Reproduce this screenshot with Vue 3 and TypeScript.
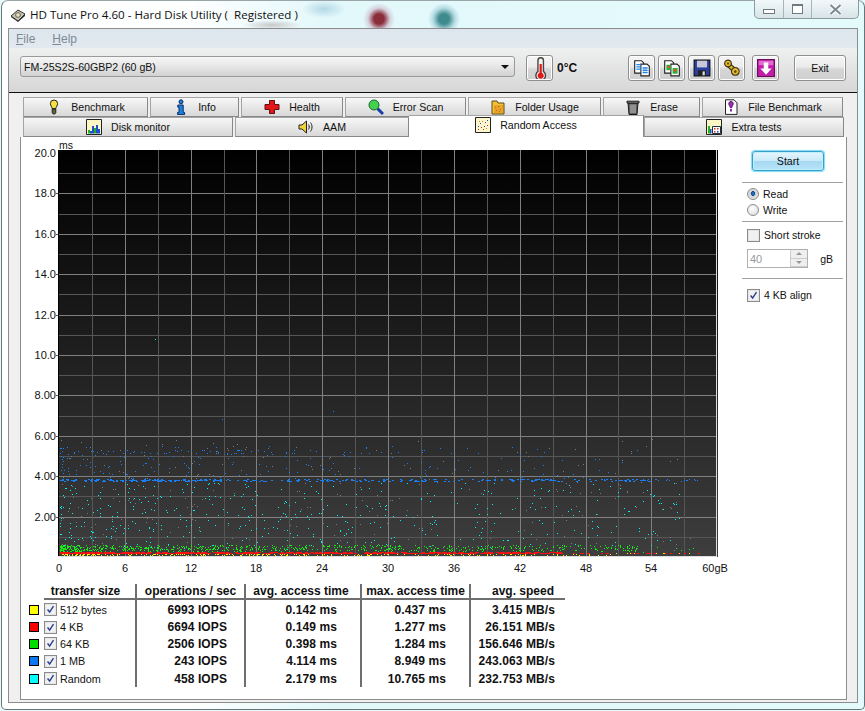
<template>
  <div class="window">
    <div class="titlebar">
      <svg class="ico" viewBox="0 0 16 16"><path d="M1 9l7-6 7 4-7 7z" fill="#c9c2ae" stroke="#333" /><path d="M1 9l7 5 7-7v2l-7 6-7-5z" fill="#333" /><circle cx="8" cy="8" r="2.4" fill="#e6dfc8" stroke="#665" /></svg>
      <span class="title">HD Tune Pro 4.60 - Hard Disk Utility (&nbsp; Registered )</span>
      <div class="caption">
        <div class="cap cap-min"><i></i></div>
        <div class="cap cap-max"><i></i></div>
        <div class="cap cap-close">
          <svg width="13" height="11" viewBox="0 0 13 11"><path d="M1.5 1l10 9M11.5 1l-10 9" stroke="#fff" stroke-width="4" /><path d="M1.5 1l10 9M11.5 1l-10 9" stroke="#7d8a90" stroke-width="2" /></svg>
        </div>
      </div>
    </div>

    <div class="client">
      <div class="menubar">
        <span><u>F</u>ile</span>
        <span><u>H</u>elp</span>
      </div>

      <div class="toolbar">
        <div class="combo">
          <span>FM-25S2S-60GBP2 (60 gB)</span>
          <i class="combo-arrow"></i>
        </div>
        <button class="tool-btn temp-btn" type="button"><AppIcon name="thermo" /></button>
        <span class="temp">0°C</span>
        <div class="tool-group">
          <button v-for="t in toolIcons" :key="t" class="tool-btn" :class="'tb-' + t" type="button"><AppIcon :name="t" /></button>
        </div>
        <button class="exit-btn" type="button">Exit</button>
      </div>

      <div class="tabs">
        <div class="tab-row">
          <div v-for="t in tabsTop" :key="t.label" class="tab" :style="{ width: t.w + 'px' }">
            <AppIcon :name="t.icon" />
            <span>{{ t.label }}</span>
          </div>
        </div>
        <div class="tab-row row2">
          <div v-for="t in tabsBottom" :key="t.label" class="tab" :class="{ active: t.active }" :style="{ width: t.w + 'px' }">
            <AppIcon :name="t.icon" />
            <span>{{ t.label }}</span>
          </div>
        </div>
      </div>

      <section class="panel">
        <div class="main">
          <svg class="chart" viewBox="21 138 719 442" width="719" height="442">
            <defs>
              <linearGradient id="plotBg" x1="0" y1="0" x2="0" y2="1">
                <stop offset="0" stop-color="#000" />
                <stop offset="1" stop-color="#3e3e3e" />
              </linearGradient>
            </defs>
            <rect x="58" y="151" width="660" height="407" fill="url(#plotBg)" />
            <g shape-rendering="crispEdges">
              <line v-for="g in hGrid" :key="'h' + g.y" x1="58" x2="717" :y1="g.y + 0.5" :y2="g.y + 0.5" :stroke="g.major ? '#808080' : '#565656'" />
              <line v-for="g in vGrid" :key="'v' + g.x" :x1="g.x + 0.5" :x2="g.x + 0.5" y1="151" y2="557" :stroke="g.major ? '#808080' : '#565656'" />
              <path v-for="s in scatter" :key="s.color" :d="s.d" :fill="s.color" />
              <line x1="58.5" x2="58.5" y1="151" y2="558" stroke="#000" />
              <line x1="716.5" x2="716.5" y1="151" y2="558" stroke="#ddd" />
              <line x1="58" x2="717" y1="557.5" y2="557.5" stroke="#ddd" />
              <line v-for="g in hGrid.filter(h => h.major)" :key="'t' + g.y" x1="56" x2="58" :y1="g.y + 0.5" :y2="g.y + 0.5" stroke="#555" />
            </g>
            <text x="59" y="150" class="axis unit">ms</text>
            <text v-for="l in yLabels" :key="l.t" x="56" :y="l.y + 4" text-anchor="end" class="axis">{{ l.t }}</text>
            <text v-for="l in xLabels" :key="l.t" :x="l.x" y="573" text-anchor="middle" class="axis">{{ l.t }}</text>
          </svg>

          <aside class="side">
            <button class="start-btn" type="button">Start</button>
            <hr />
            <label class="opt first"><i class="radio on"></i>Read</label>
            <label class="opt"><i class="radio"></i>Write</label>
            <hr class="tight" />
            <label class="opt stroke"><i class="check"></i>Short stroke</label>
            <div class="spin-row">
              <div class="spin">
                <span>40</span>
                <div class="spin-btns"><b class="up"></b><b class="down"></b></div>
              </div>
              <span>gB</span>
            </div>
            <hr class="last" />
            <label class="opt"><i class="check"><svg viewBox="0 0 13 13"><path d="M3 6.5l2.5 3L10 2.5" fill="none" stroke="#2c3f8f" stroke-width="1.7" /></svg></i>4 KB align</label>
          </aside>
        </div>

        <div class="results">
          <div></div>
          <div class="th first">transfer size</div>
          <div class="th bar">operations / sec</div>
          <div class="th bar avgh">avg. access time</div>
          <div class="th bar">max. access time</div>
          <div class="th bar speed">avg. speed</div>
          <template v-for="r in rows" :key="r.name">
            <div class="sw-cell"><i class="swatch" :style="{ background: r.color }"></i></div>
            <div class="name-cell">
              <i class="check small"><svg viewBox="0 0 13 13"><path d="M3 6.5l2.5 3L10 2.5" fill="none" stroke="#2c3f8f" stroke-width="1.7" /></svg></i>
              {{ r.name }}
            </div>
            <div class="val bar c2">{{ r.ops }} IOPS</div>
            <div class="val bar c3">{{ r.avg }} ms</div>
            <div class="val bar c3">{{ r.max }} ms</div>
            <div class="val bar c5">{{ r.speed }} MB/s</div>
          </template>
        </div>
      </section>
    </div>
  </div>
</template>

<script setup lang="ts">
import { computed, defineComponent, h } from 'vue'

type Shape = { d: string; fill?: string; stroke?: string; w?: number }

const icons: Record<string, Shape[]> = {
  bulb: [
    { d: 'M8 1a3.6 3.6 0 0 0-3.6 3.6c0 2 1.5 3 1.8 5h3.6c.3-2 1.8-3 1.8-5A3.6 3.6 0 0 0 8 1z', fill: '#f6e23c', stroke: '#222' },
    { d: 'M6.2 10h3.6v3.6l-1 1.4H7.2l-1-1.4z', fill: '#6b6134', stroke: '#222' },
  ],
  info: [
    { d: 'M8 .8a2 2 0 1 1 0 4 2 2 0 0 1 0-4z', fill: '#1b7fe0', stroke: '#0d2c66' },
    { d: 'M4.8 6h5.4v7.4h1.4v2.2H4.6v-2.2H6V8.2H4.8z', fill: '#1b7fe0', stroke: '#0d2c66' },
  ],
  health: [{ d: 'M5.5 1.500h5v4H15v5h-4.500v4h-5v-4H1v-5h4.500z', fill: '#e2161b', stroke: '#5c1010' }],
  search: [
    { d: 'M9.600 9.600L15 15', stroke: '#1a3ea8', w: 3 },
    { d: 'M6 1a5 5 0 1 1 0 10A5 5 0 0 1 6 1z', fill: '#45d24a', stroke: '#14663a' },
  ],
  folder: [
    { d: 'M2 2h5l1 2h6v11H2z', fill: '#f3c230', stroke: '#5a4a1c' },
    { d: 'M4 6h9v8H4z', fill: '#e9a227' },
    { d: 'M5 8h1v1H5zM8 7h1v1H8zM10 10h1v1h-1zM6 11h1v1H6zM9 12h1v1H9z', fill: '#b66a18' },
  ],
  trash: [
    { d: 'M3 4h10l-1 11.500H4z', fill: '#5d5d5d', stroke: '#1c1c1c' },
    { d: 'M2 2.200h12V4H2z', fill: '#9b9b9b', stroke: '#1c1c1c' },
    { d: 'M6 5.500v8.500M8 5.500v8.500M10 5.500v8.500', stroke: '#c4c4c4' },
  ],
  filebench: [
    { d: 'M2.500 .8h8.500l3 3v11.600H2.500z', fill: '#fff', stroke: '#222' },
    { d: 'M8 2.500c1.600 0 2.200 1 2.200 2.200 0 1.600-1.200 2.400-1.500 4H7.300c-.3-1.600-1.500-2.400-1.500-4C5.800 3.500 6.400 2.500 8 2.500z', fill: '#9a2fb0', stroke: '#5a1a70' },
    { d: 'M7 10h2v2.500H7z', fill: '#8a2aa0' },
  ],
  monitor: [
    { d: 'M.5.5h15v15H.5z', fill: '#fbf6c4', stroke: '#222' },
    { d: 'M2 11h2v3.500H2zM8 9h2v5.500H8z', fill: '#22b322' },
    { d: 'M4 12h2v2.500H4zM6 7h2v7.500H6zM10 6h2v8.500h-2zM12 10h2v4.500h-2z', fill: '#1f4fd0' },
  ],
  speaker: [
    { d: 'M1 6h3l4.500-4v12L4 10H1z', fill: '#f2d43a', stroke: '#222' },
    { d: 'M10.500 5.500c1 1.500 1 3.500 0 5M12.500 3.500c2 2.500 2 6.500 0 9', fill: 'none', stroke: '#222' },
  ],
  random: [
    { d: 'M.5.5h15v15H.5z', fill: '#fdf7cf', stroke: '#222' },
    { d: 'M3 12h1v1H3zM6 10h1v1H6zM10 5h1v1h-1zM12 8h1v1h-1zM8 12h1v1H8z', fill: '#d02020' },
    { d: 'M5 6h1v1H5zM9 9h1v1H9zM12 3h1v1h-1zM3 9h1v1H3z', fill: '#2040c0' },
    { d: 'M7 4h1v1H7zM11 11h1v1h-1zM4 4h1v1H4z', fill: '#d09020' },
  ],
  extra: [
    { d: 'M.5.5h15v15H.5z', fill: '#fbf6c4', stroke: '#222' },
    { d: 'M2 7h2v7.500H2z', fill: '#22b322' },
    { d: 'M4 10h1.500v4.500H4z', fill: '#1f4fd0' },
    { d: 'M6.500 7.500h8v7h-8z', fill: '#fff', stroke: '#234' },
    { d: 'M8 9h1.500v1.500H8zM11 9h1.500v1.500H11zM8 12h1.500v1.500H8z', fill: '#d03030' },
    { d: 'M11 12h1.500v1.500H11z', fill: '#2040c0' },
  ],
  thermo: [
    { d: 'M6.500 2.500a2 2 0 0 1 4 0v8a3.500 3.500 0 1 1-4 0z', fill: '#f4f0ea', stroke: '#444' },
    { d: 'M7.700 5h1.600v6.500a2.200 2.200 0 1 1-1.600 0z', fill: '#e01a1a' },
  ],
  copydoc: [
    { d: 'M1.500 1.500h6l2 2v9h-8z', fill: '#fff', stroke: '#222' },
    { d: 'M7 4.500h5.500l2 2v8.500H7z', fill: '#fff', stroke: '#222' },
    { d: 'M3 5h4M3 7h4M3 9h4M8.500 8h4.500M8.500 10h4.500M8.500 12h4.500', stroke: '#1d86e8', w: 1.2 },
  ],
  copyimg: [
    { d: 'M1.500 1.500h6l2 2v9h-8z', fill: '#fff', stroke: '#222' },
    { d: 'M7 4.500h5.500l2 2v8.500H7z', fill: '#fff', stroke: '#222' },
    { d: 'M3 5h4v5H3zM8.500 8h4.500v5H8.500z', fill: '#28b040' },
    { d: 'M4 6h2v2H4zM9.500 9h2.500v2H9.500z', fill: '#e85020' },
  ],
  floppy: [
    { d: 'M1 1h14v14H1z', fill: '#2b3fa0', stroke: '#111' },
    { d: 'M3.500 1.500h9v6h-9z', fill: '#c8c8d8' },
    { d: 'M4.500 10h7v5h-7z', fill: '#222' },
    { d: 'M8.500 11h2v3.500h-2z', fill: '#ddd' },
  ],
  tools: [
    { d: 'M3 3.500l10 9', stroke: '#3a3010', w: 4.5 },
    { d: 'M3 3.500l10 9', stroke: '#e4b82c', w: 2.5 },
    { d: 'M4.500 1a3 3 0 1 1-.1 0zM11 7.500a3.500 3.500 0 1 1-.1 0z', fill: '#e4b82c', stroke: '#3a3010' },
    { d: 'M4.500 3a1 1 0 1 1-.1 0zM11 10a1.200 1.200 0 1 1-.1 0z', fill: '#5a4510' },
  ],
  save: [
    { d: 'M.5.5h15v15H.5z', fill: '#c01ea8', stroke: '#6a0f5c' },
    { d: 'M1.500 1.500h13v4h-13z', fill: '#e26cd0' },
    { d: 'M6 3h4v5.500h3L8 14 3 8.500h3z', fill: '#fff' },
  ],
}

const AppIcon = defineComponent({
  props: { name: { type: String, required: true } },
  setup(props) {
    return () =>
      h('svg', { class: 'ico', viewBox: '0 0 16 16', width: 16, height: 16, style: { flex: 'none' } },
        icons[props.name].map(s =>
          h('path', { d: s.d, fill: s.fill ?? 'none', stroke: s.stroke ?? 'none', 'stroke-width': s.w ?? 1 })
        )
      )
  },
})

const toolIcons = ['copydoc', 'copyimg', 'floppy', 'tools', 'save']

const tabsTop = [
  { label: 'Benchmark', icon: 'bulb', w: 125 },
  { label: 'Info', icon: 'info', w: 89 },
  { label: 'Health', icon: 'health', w: 102 },
  { label: 'Error Scan', icon: 'search', w: 121 },
  { label: 'Folder Usage', icon: 'folder', w: 133 },
  { label: 'Erase', icon: 'trash', w: 97 },
  { label: 'File Benchmark', icon: 'filebench', w: 141 },
]
const tabsBottom = [
  { label: 'Disk monitor', icon: 'monitor', w: 210, active: false },
  { label: 'AAM', icon: 'speaker', w: 174, active: false },
  { label: 'Random Access', icon: 'random', w: 235, active: true },
  { label: 'Extra tests', icon: 'extra', w: 200, active: false },
]

const rows = [
  { name: '512 bytes', color: '#ffff00', ops: 6993, avg: '0.142', max: '0.437', speed: '3.415' },
  { name: '4 KB', color: '#ff0000', ops: 6694, avg: '0.149', max: '1.277', speed: '26.151' },
  { name: '64 KB', color: '#00e000', ops: 2506, avg: '0.398', max: '1.284', speed: '156.646' },
  { name: '1 MB', color: '#0a78f0', ops: 243, avg: '4.114', max: '8.949', speed: '243.063' },
  { name: 'Random', color: '#00ffff', ops: 458, avg: '2.179', max: '10.765', speed: '232.753' },
]

const yOf = (ms: number) => Math.round(558 - ms * 20.2)
const xOf = (gb: number) => Math.round(59 + gb * 10.97)

const hGrid = Array.from({ length: 19 }, (_, i) => ({ y: yOf(i + 1), major: (i + 1) % 2 === 0 }))
const vGrid = Array.from({ length: 19 }, (_, i) => ({ x: xOf((i + 1) * 3), major: (i + 1) % 2 === 0 }))
const yLabels = ['2.00', '4.00', '6.00', '8.00', '10.0', '12.0', '14.0', '16.0', '18.0', '20.0'].map((t, i) => ({ t, y: yOf((i + 1) * 2) }))
const xLabels = [0, 6, 12, 18, 24, 30, 36, 42, 48, 54].map(v => ({ t: String(v), x: xOf(v) })).concat({ t: '60gB', x: 715 })

// fixed seed so the dots stay put between runs
let seed = 48271
function rnd() {
  seed = (seed * 1103515245 + 12345) & 0x7fffffff
  return seed / 0x7fffffff
}

function dots(n: number, xMax: (r: number) => number, yFn: () => number, size = 1) {
  let d = ''
  for (let i = 0; i < n; i++) {
    const x = Math.round(xMax(rnd()))
    const y = Math.round(yFn())
    d += `M${x} ${y}h${size}v1h-${size}z`
  }
  return d
}

const fade = (lo: number, hi: number, p = 1.4) => (r: number) => lo + (hi - lo) * Math.pow(r, p)

const scatter = computed(() => [
  {
    color: '#7a7a7a',
    d: dots(260, fade(60, 690), () => 440 + rnd() * 116),
  },
  {
    color: '#00f4f8',
    d: dots(430, fade(60, 680, 1.3), () => 484 + rnd() * 66) + 'M155 340h1v1h-1z',
  },
  {
    color: '#1880f4',
    d:
      dots(300, fade(60, 650, 1.25), () => 480 + rnd() * 2, 2) +
      dots(30, r => 600 + 100 * r, () => 480 + rnd() * 2, 1) +
      dots(180, fade(60, 640, 1.4), () => 447 + rnd() * 33) +
      dots(50, r => 60 + 260 * r, () => 451 + rnd() * 4) +
      'M222 420h1v1h-1zM333 412h1v1h-1z',
  },
  {
    color: '#14f014',
    d: dots(720, fade(60, 640, 1.7), () => 546 + rnd() * 6) + dots(14, r => 600 + r * 100, () => 548 + rnd() * 5),
  },
  {
    color: '#ff0f0f',
    d: dots(520, fade(60, 560, 1.25), () => 553 + rnd() * 1.4, 3) + dots(22, r => 560 + r * 140, () => 554, 2),
  },
  {
    color: '#ffee00',
    d: dots(230, fade(60, 620, 1.3), () => 554.6 + rnd() * 1.6) + dots(10, r => 610 + r * 100, () => 554),
  },
])
</script>

<style>
html, body { margin: 0; background: #e6f9fb; }
</style>

<style scoped>
.window {
  width: 864px;
  height: 710px;
  margin-left: 1px;
  box-sizing: border-box;
  border: 1px solid #66757a;
  border-top-color: #9aa5a8;
  border-radius: 7px 7px 5px 5px;
  padding: 0 6px 6px;
  display: flex;
  flex-direction: column;
  font-family: "Liberation Sans", Arial, sans-serif;
  font-size: 10.6px;
  color: #111;
  background:
    radial-gradient(circle at 377px 18px, #8b2c3a 0, #8b2c3a 5px, rgba(200, 170, 190, .5) 11px, transparent 16px),
    radial-gradient(circle at 442px 18px, #3f8a8c 0, #3f8a8c 5px, rgba(150, 200, 210, .6) 11px, transparent 16px),
    radial-gradient(ellipse 22px 9px at 322px 8px, #b4d8e6 0, transparent 100%),
    radial-gradient(ellipse 30px 5px at 270px 24px, #c8c8c8 0, transparent 100%),
    linear-gradient(90deg, #fff 0, #fdfefe 190px, #e2f8fb 330px, #e4fbfd 100%);
}
.titlebar {
  height: 27px;
  flex: none;
  display: flex;
  align-items: flex-start;
  padding-top: 6px;
  box-sizing: border-box;
  position: relative;
}
.titlebar .ico { width: 16px; height: 16px; margin: 0 4px 0 2px; }
.title {
  font-family: "Open Sans", "Noto Sans", sans-serif;
  font-size: 11.6px;
  line-height: 16px;
  color: #111;
}
.caption {
  position: absolute;
  top: -1px;
  right: -1px;
  display: flex;
  height: 18px;
  border: 1px solid #8e9a9e;
  border-top: 0;
  border-radius: 0 0 5px 5px;
  background: linear-gradient(#f2f8f9, #d8e4e8);
}
.cap {
  height: 18px;
  display: flex;
  align-items: center;
  justify-content: center;
  border-left: 1px solid #a8b4b8;
}
.cap-min { width: 28px; border-left: 0; }
.cap-max { width: 27px; }
.cap-close { width: 46px; }
.cap-min i { width: 10px; height: 3px; margin-top: 5px; border: 1px solid #707a7e; background: #fff; }
.cap-max i { width: 9px; height: 7px; border: 1px solid #707a7e; border-top-width: 2px; background: #fff; }

.client {
  flex: 1;
  border: 1px solid #8c8c8c;
  background: #f0f0f0;
  display: flex;
  flex-direction: column;
  min-height: 0;
}
.menubar {
  height: 19px;
  flex: none;
  background: linear-gradient(#dde6ee, #e2e9ef);
  display: flex;
  gap: 17px;
  align-items: center;
  padding-left: 7px;
  font-size: 12px;
  color: #7d8a96;
}
.toolbar {
  height: 45px;
  flex: none;
  box-sizing: border-box;
  background: linear-gradient(#eff0f0, #d6d6d6);
  border-bottom: 1px solid #111;
  display: flex;
  align-items: flex-start;
  padding: 7px 0 0 11px;
}
.combo {
  width: 495px;
  height: 21px;
  margin-top: 1px;
  box-sizing: border-box;
  border: 1px solid #9a9a9a;
  border-radius: 3px;
  background: linear-gradient(#f6f6f6 0, #e6e6e6 50%, #d2d2d2 100%);
  display: flex;
  align-items: center;
  justify-content: space-between;
  padding: 0 5px 0 3px;
}
.combo-arrow {
  width: 0;
  height: 0;
  border: 4px solid transparent;
  border-top: 4px solid #111;
  border-bottom: 0;
}
.tool-btn, .exit-btn {
  height: 26px;
  box-sizing: border-box;
  border: 1px solid #8f8f8f;
  border-radius: 3px;
  box-shadow: inset 0 0 0 1px #fff;
  background: linear-gradient(#f5f5f5 0, #ebebeb 45%, #d6d6d6 55%, #cfcfcf 100%);
  padding: 0;
  display: flex;
  align-items: center;
  justify-content: center;
  font: inherit;
  color: #111;
}
.tool-btn { width: 27px; }
.tool-btn .ico { width: 18px; height: 18px; }
.temp-btn { margin-left: 11px; }
.temp-btn .ico { width: 22px; height: 22px; }
.temp {
  width: 75px;
  padding-left: 4px;
  box-sizing: border-box;
  font-weight: 700;
  font-size: 12px;
  line-height: 26px;
}
.tool-group { display: flex; gap: 3px; }
.tb-save { margin-left: 4px; }
.exit-btn { width: 52px; margin-left: 15px; }

.tabs { flex: none; padding: 4px 0 0 14px; }
.tab-row { display: flex; gap: 2px; height: 20px; }
.row2 { gap: 0; margin-top: 0; }
.row2 .tab:first-child { margin-right: 2px; }
.tab {
  box-sizing: border-box;
  height: 20px;
  border: 1px solid #a4a4a4;
  border-right-color: #888;
  border-bottom-color: #888;
  background: linear-gradient(#f7f7f7, #d8d8d8);
  display: flex;
  align-items: center;
  justify-content: center;
  gap: 9px;
}
.tab.active {
  height: 22px;
  margin-top: -2px;
  padding-bottom: 4px;
  background: #fff;
  border-bottom: 0;
  border-right: 1px solid #888;
  border-left: 0;
  position: relative;
}
.panel {
  flex: 1;
  margin: 0 10px 2px 11px;
  box-sizing: border-box;
  border: 1px solid #8c8c8c;
  border-top: 0;
  background: #fff;
  display: flex;
  flex-direction: column;
}
.main { display: flex; flex: none; }
.chart { display: block; flex: none; }
.axis {
  font-family: "Liberation Sans", Arial, sans-serif;
  font-size: 11px;
  fill: #111;
}
.unit { font-size: 10.5px; }

.side { width: 101px; margin-left: 2px; padding-top: 14px; box-sizing: border-box; }
.side hr { border: 0; height: 1px; background: #a0a0a0; margin: 11px 0 3px; }
.side hr.tight { margin: 3px 0 0; }
.side hr.last { margin: 10px 0 8px; }
.start-btn {
  display: block;
  width: 72px;
  height: 20px;
  margin-left: 10px;
  box-sizing: border-box;
  border: 1px solid #3a9fc8;
  border-radius: 3px;
  box-shadow: 0 0 1px 1px #7fdcf7, inset 0 0 0 1px #bfefff;
  background: linear-gradient(#e6f6fd 0, #cbeafa 48%, #a7d8f2 52%, #b6e4f8 100%);
  font: inherit;
  color: #111;
  padding: 0;
}
.opt {
  display: flex;
  align-items: center;
  height: 16px;
  padding-left: 5px;
  gap: 4px;
  font-size: 10.5px;
}
.opt.stroke { margin-top: 5px; }
.radio {
  width: 12px;
  height: 12px;
  flex: none;
  box-sizing: border-box;
  border: 1px solid #8b8b8b;
  border-radius: 50%;
  background: radial-gradient(circle at 40% 35%, #fff, #d8d8d8);
}
.radio.on { background: radial-gradient(circle at 50% 45%, #2f7fd0 0, #0d4f94 28%, #cfcfcf 34%, #f4f4f4 100%); }
.check {
  width: 13px;
  height: 13px;
  flex: none;
  box-sizing: border-box;
  border: 1px solid #8b8b8b;
  box-shadow: inset 0 0 0 1px #e6e6e6;
  background: #f1f1f1;
  display: block;
}
.check svg { display: block; width: 11px; height: 11px; }
.spin-row {
  display: flex;
  align-items: center;
  justify-content: space-between;
  margin: 6px 10px 0 5px;
  font-size: 10.5px;
}
.spin {
  width: 61px;
  height: 19px;
  box-sizing: border-box;
  border: 1px solid #b0b0b0;
  background: #fff;
  color: #999;
  display: flex;
  align-items: center;
  justify-content: space-between;
  padding-left: 2px;
  font-size: 11px;
}
.spin-btns { width: 16px; height: 17px; display: flex; flex-direction: column; border-left: 1px solid #ccc; }
.spin-btns b { flex: 1; position: relative; background: #efefef; border-bottom: 1px solid #ccc; display: flex; align-items: center; justify-content: center; }
.spin-btns b::after { content: ""; border: 3px solid transparent; }
.spin-btns .up::after { border-bottom-color: #999; border-top: 0; }
.spin-btns .down::after { border-top-color: #999; border-bottom: 0; }

.results {
  display: grid;
  grid-template-columns: 15px 91px 109px 116px 109px 96px;
  grid-template-rows: 16px 19px 16px 17px 18px 17px;
  margin: 5px 0 0 8px;
  align-items: stretch;
}
.th {
  font-weight: 700;
  font-size: 12px;
  line-height: 14px;
  text-align: center;
  border-bottom: 2px solid #6e6e6e;
  box-sizing: border-box;
}
.th.first { padding-right: 8px; letter-spacing: -.1px; }
.th.avgh { padding-right: 4px; }
.th.speed { padding-left: 10px; }
.bar { border-left: 2px solid #6e6e6e; box-sizing: border-box; }
.sw-cell { display: flex; align-items: center; }
.swatch { width: 8px; height: 8px; border: 1px solid #000; display: block; }
.name-cell { display: flex; align-items: center; gap: 3px; font-size: 10.8px; }
.check.small { width: 13px; height: 13px; }
.val {
  font-weight: 700;
  font-size: 12px;
  letter-spacing: .1px;
  display: flex;
  align-items: center;
  justify-content: flex-end;
}
.c2 { padding-right: 17px; }
.c3 { padding-right: 23px; }
.c5 { padding-right: 10px; }
</style>
